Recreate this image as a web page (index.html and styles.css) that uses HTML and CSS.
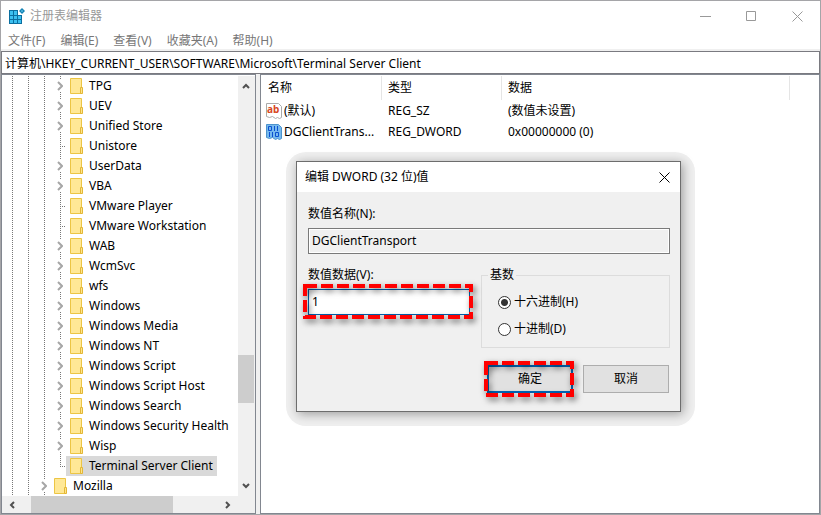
FILE: index.html
```html
<!DOCTYPE html>
<html lang="zh-CN">
<head>
    <meta charset="UTF-8">
    <meta name="viewport" content="width=device-width, initial-scale=1.0">
    <title>注册表编辑器</title>
    <link rel="stylesheet" href="styles.css">
</head>
<body>
    <svg style="display: none;">
        <symbol id="folder" viewBox="0 0 13 16">
            <path d="M.5.5h11v15H.5z" fill="#ffe896" stroke="#ecc544"/>
            <path d="M10.5 9.5h2v6h-2z" fill="#ffe48a" stroke="#e3b736"/>
        </symbol>
        <symbol id="arrow" viewBox="0 0 6 8">
            <path d="M1 0l4 4-4 4" fill="none" stroke="#a6a6a6" stroke-width="2"/>
        </symbol>
        <symbol id="scroll-arrow" viewBox="0 0 8 8">
            <path d="M1 6l3-3 3 3" fill="none" stroke="#505050" stroke-width="2"/>
        </symbol>
    </svg>

    <div class="window">
        <header class="titlebar">
            <svg class="app-icon" viewBox="0 0 16 16">
                <path d="M0 2h9v5h4v9H0z" fill="#0b6fa0"/>
                <path d="M1 3h3v4H1zM5 3h3v4H5zM1 8h3v3H1zM5 8h3v3H5zM9 8h3v3H9zM1 12h3v3H1zM5 12h3v3H5zM9 12h3v3H9z" fill="#3cc0f0"/>
                <path d="M13 0l3 3-3 3-3-3z" fill="#1583b5"/>
                <path d="M13 2l1 1-1 1-1-1z" fill="#6fd3f7"/>
            </svg>
            <h1>注册表编辑器</h1>
            <div class="window-buttons">
                <button type="button" aria-label="最小化"><svg viewBox="0 0 11 11"><path d="M0 5.5h11"/></svg></button>
                <button type="button" aria-label="最大化"><svg viewBox="0 0 11 11"><path d="M.5.5h9v9h-9z"/></svg></button>
                <button type="button" aria-label="关闭"><svg viewBox="0 0 11 11"><path d="M.5.5l10 10M10.5.5l-10 10"/></svg></button>
            </div>
        </header>

        <nav class="menu">
            <a href="#">文件(F)</a>
            <a href="#">编辑(E)</a>
            <a href="#">查看(V)</a>
            <a href="#">收藏夹(A)</a>
            <a href="#">帮助(H)</a>
        </nav>

        <input class="address" type="text" aria-label="地址" value="计算机\HKEY_CURRENT_USER\SOFTWARE\Microsoft\Terminal Server Client">

        <main class="panes">
            <section class="tree-pane">
                <ul class="tree" id="tree"></ul>
                <div class="scroll scroll-v">
                    <svg><use href="#scroll-arrow"/></svg>
                    <div class="thumb"></div>
                    <svg class="down"><use href="#scroll-arrow"/></svg>
                </div>
                <div class="scroll scroll-h">
                    <svg class="left"><use href="#scroll-arrow"/></svg>
                    <div class="thumb"></div>
                    <svg class="right"><use href="#scroll-arrow"/></svg>
                </div>
            </section>

            <section class="values-pane">
                <table>
                    <thead>
                        <tr><th class="col-name">名称</th><th class="col-type">类型</th><th class="col-data">数据</th><th class="col-rest"></th></tr>
                    </thead>
                    <tbody>
                        <tr>
                            <td class="value-name">
                                <svg viewBox="0 0 16 16">
                                    <path d="M.5.5h12l3 3v11l-2 1-2-1-2 1-3-2-3 1-3-1z" fill="#fff" stroke="#aaa"/>
                                    <text x="1" y="10" fill="#d8481f">ab</text>
                                </svg>
                                <span>(默认)</span>
                            </td>
                            <td>REG_SZ</td>
                            <td>(数值未设置)</td>
                            <td></td>
                        </tr>
                        <tr>
                            <td class="value-name">
                                <svg viewBox="0 0 16 16">
                                    <path d="M.5.5h12l3 3v11l-2 1-2-1-2 1-3-2-3 1-3-1z" fill="#76b9ee" stroke="#4d93cc"/>
                                    <path d="M2.5 2.500h3v4h-3zM8.500 2v5M11.500 2v5M3.500 8v5M6.500 8v5M9.500 8.500h3v4h-3z" fill="none" stroke="#0b50d0"/>
                                </svg>
                                <span>DGClientTrans...</span>
                            </td>
                            <td>REG_DWORD</td>
                            <td>0x00000000 (0)</td>
                            <td></td>
                        </tr>
                    </tbody>
                </table>
            </section>
        </main>
    </div>

    <div class="dialog-halo">
        <form class="dialog" role="dialog" aria-labelledby="dialog-title">
            <div class="dialog-title">
                <h2 id="dialog-title">编辑 DWORD (32 位)值</h2>
                <button type="button" aria-label="关闭"><svg viewBox="0 0 11 11"><path d="M.5.5l10 10M10.5.5l-10 10"/></svg></button>
            </div>
            <div class="dialog-body">
                <div class="field field-name">
                    <label for="value-name">数值名称(N):</label>
                    <input type="text" id="value-name" value="DGClientTransport" readonly>
                </div>
                <div class="field">
                    <label for="value-data">数值数据(V):</label>
                    <div class="marked mark-input">
                        <input type="text" id="value-data" value="1">
                        <svg class="mark"><rect width="100%" height="100%"/></svg>
                    </div>
                </div>
                <fieldset>
                    <legend>基数</legend>
                    <label for="hex"><input type="radio" name="base" id="hex" checked>十六进制(H)</label>
                    <label for="dec"><input type="radio" name="base" id="dec">十进制(D)</label>
                </fieldset>
                <div class="actions">
                    <div class="marked mark-button">
                        <button type="submit" class="primary">确定</button>
                        <svg class="mark"><rect width="100%" height="100%"/></svg>
                    </div>
                    <button type="button">取消</button>
                </div>
            </div>
        </form>
    </div>

    <script src="script.js"></script>
</body>
</html>
```
FILE: styles.css
```css
* {
    box-sizing: border-box;
}
body {
    margin: 0;
    background-color: #9b9b9f;
    color: #000;
    font-family: "Noto Sans", "Noto Sans CJK SC", sans-serif;
    font-size: 12px;
    line-height: 20px;
}
input, button {
    font: inherit;
    color: inherit;
    margin: 0;
}
.window {
    display: flex;
    flex-direction: column;
    height: 100vh;
    border: 1px solid #a5a5a8;
    background-color: #f0f0f0;
}

/* title bar and menu */
.titlebar {
    display: flex;
    align-items: center;
    height: 30px;
    padding-left: 8px;
    background-color: white;
    color: #999;
}
.app-icon {
    width: 16px;
    height: 16px;
}
.titlebar h1 {
    flex: 1;
    margin: 0 0 0 5px;
    font-size: 12px;
    font-weight: normal;
}
.window-buttons {
    display: flex;
}
.window-buttons button {
    display: flex;
    align-items: center;
    justify-content: center;
    width: 46px;
    height: 29px;
    padding: 0;
    border: none;
    background: none;
}
.window-buttons svg, .dialog-title svg {
    width: 11px;
    height: 11px;
    fill: none;
    stroke: #999;
}
.menu {
    display: flex;
    gap: 15px;
    height: 18px;
    padding-left: 7px;
    margin-bottom: 2px;
    background-color: white;
}
.menu a {
    color: #777;
    text-decoration: none;
}
.address {
    width: 100%;
    height: 23px;
    padding: 0 3px;
    border: 1px solid #7a7a80;
    background-color: white;
}

/* panes */
.panes {
    display: flex;
    flex: 1;
    gap: 4px;
    min-height: 0;
}
.tree-pane, .values-pane {
    border: 1px solid #828790;
    background-color: white;
    padding-top: 1px;
}
.tree-pane {
    display: grid;
    grid-template-columns: 1fr 17px;
    grid-template-rows: 1fr 17px;
    width: 255px;
}
.values-pane {
    flex: 1;
}
.tree {
    margin: 0;
    padding: 0 0 0 2px;
    list-style: none;
    min-height: 0;
    overflow: hidden;
}
.tree li {
    display: flex;
    height: 20px;
    white-space: nowrap;
}
.guide, .branch {
    flex: none;
    width: 16px;
    background: repeating-linear-gradient(#777 0 1px, white 1px 2px) 8px 0 / 1px 100% no-repeat;
}
.branch {
    display: flex;
    align-items: center;
    width: 14px;
    padding-left: 5px;
}
.branch svg {
    width: 6px;
    height: 12px;
    background-color: white;
}
.leaf {
    background:
        repeating-linear-gradient(#777 0 1px, white 1px 2px) 8px 0 / 1px 100% no-repeat,
        repeating-linear-gradient(90deg, #777 0 1px, white 1px 2px) 8px 10px / 6px 1px no-repeat;
}
.last {
    background-size: 1px 50%, 6px 1px;
}
.node {
    display: flex;
    align-items: center;
    gap: 6px;
    padding: 0 4px;
}
.node svg {
    width: 13px;
    height: 16px;
}
.selected {
    background-color: #d9d9d9;
}

/* scroll bars */
.scroll {
    display: grid;
    background-color: #f0f0f0;
}
.scroll svg {
    width: 8px;
    height: 8px;
    place-self: center;
}
.scroll-v {
    grid-template-rows: 20px 259fr 48fr 73fr 20px;
    padding-right: 1px;
}
.scroll-v .thumb {
    grid-row: 3;
}
.scroll-v .down {
    grid-row: 5;
    transform: rotate(180deg);
}
.scroll-h {
    grid-column: span 2;
    grid-template-columns: 20px 9fr 142fr 45fr 20px;
    padding-right: 17px;
}
.scroll-h .thumb {
    grid-column: 3;
}
.scroll-h .left {
    transform: rotate(-90deg);
}
.scroll-h .right {
    grid-column: 5;
    transform: rotate(90deg);
}
.thumb {
    background-color: #cdcdcd;
}

/* value list */
table {
    width: 100%;
    table-layout: fixed;
    border-collapse: separate;
    border-spacing: 0;
}
th, td {
    height: 21px;
    padding: 0 6px;
    text-align: left;
    font-weight: normal;
    white-space: nowrap;
}
th {
    height: 24px;
    border-right: 1px solid #e5e5e5;
}
.col-rest {
    border-right: none;
}
.col-name {
    width: 121px;
    padding-left: 7px;
}
.col-type {
    width: 120px;
}
.col-data {
    width: 288px;
}
.value-name {
    display: flex;
    align-items: center;
    gap: 2px;
    padding: 0 0 0 5px;
}
.value-name svg {
    width: 16px;
    height: 16px;
}
.value-name text {
    font: bold 10px "Noto Sans", sans-serif;
}

/* edit dialog */
.dialog-halo {
    position: absolute;
    top: 152px;
    left: 286px;
    padding: 9px 14px 14px 10px;
    border-radius: 20px;
    background-color: #efefef;
}
.dialog {
    width: 385px;
    border: 1px solid #6d6d6d;
    background-color: #f0f0f0;
    box-shadow: 2px 2px 10px rgba(0, 0, 0, 0.35);
}
.dialog-title {
    display: flex;
    align-items: center;
    justify-content: space-between;
    height: 30px;
    padding: 0 10px 0 8px;
    background-color: white;
}
.dialog-title h2 {
    margin: 0;
    font-size: 12px;
    font-weight: normal;
}
.dialog-title button {
    display: flex;
    padding: 0;
    border: none;
    background: none;
}
.dialog-title svg {
    stroke: black;
}
.dialog-body {
    display: grid;
    grid-template-columns: 162px 1fr;
    column-gap: 11px;
    padding: 12px 10px 18px 11px;
}
.field {
    display: flex;
    flex-direction: column;
    gap: 4px;
}
.field input {
    width: 100%;
    height: 26px;
    padding: 0 3px 2px;
    border: 1px solid #7a7a7a;
    background-color: white;
    outline: none;
}
.field-name {
    grid-column: span 2;
    margin-bottom: 11px;
}
.field-name input {
    background-color: #f0f0f0;
    box-shadow: inset 0 0 0 1px white;
}
.marked {
    position: relative;
}
.marked input {
    display: block;
    border-color: #0063b1;
}
.mark {
    position: absolute;
    overflow: visible;
    pointer-events: none;
    filter: drop-shadow(2px 3px 3px rgba(0, 0, 0, 0.6));
}
.mark rect {
    fill: none;
    stroke: #f00;
    stroke-width: 4;
    stroke-dasharray: 12 4;
}
.mark-input .mark {
    top: -3px;
    left: -3px;
    width: calc(100% + 4px);
    height: calc(100% + 5px);
}
.mark-button .mark {
    top: -2px;
    left: -1px;
    width: 100%;
    height: calc(100% + 4px);
}
fieldset {
    display: flex;
    flex-direction: column;
    gap: 7px;
    height: 83px;
    margin: 0;
    padding: 7px 16px 0;
    border: 1px solid #dcdcdc;
}
legend {
    margin-left: -10px;
    padding: 0 2px;
}
fieldset label {
    display: flex;
    align-items: center;
    gap: 3px;
}
fieldset input {
    appearance: none;
    width: 13px;
    height: 13px;
    border: 1px solid #333;
    border-radius: 50%;
    background-color: white;
}
fieldset input:checked {
    background: radial-gradient(#333 3px, white 4px);
}
.actions {
    display: flex;
    grid-column: span 2;
    justify-content: flex-end;
    gap: 10px;
    margin-top: 17px;
    padding-right: 1px;
}
.actions button {
    width: 86px;
    height: 28px;
    padding: 0;
    border: 1px solid #adadad;
    background-color: #e1e1e1;
}
.actions .primary {
    display: block;
    border: 2px solid #0067b8;
}
```
FILE: script.js
```js
// type: "open" has an arrow, "leaf" a short line, "last" ends its branch
const keys = [
    ["TPG", "open"],
    ["UEV", "open"],
    ["Unified Store", "open"],
    ["Unistore", "leaf"],
    ["UserData", "open"],
    ["VBA", "open"],
    ["VMware Player", "leaf"],
    ["VMware Workstation", "leaf"],
    ["WAB", "open"],
    ["WcmSvc", "open"],
    ["wfs", "open"],
    ["Windows", "open"],
    ["Windows Media", "open"],
    ["Windows NT", "open"],
    ["Windows Script", "open"],
    ["Windows Script Host", "open"],
    ["Windows Search", "open"],
    ["Windows Security Health", "open"],
    ["Wisp", "open"],
    ["Terminal Server Client", "last"],
    ["Mozilla", "open", 2]
];

const tree = document.getElementById("tree");

for (const [name, type, depth = 3] of keys) {
    const item = document.createElement("li");
    const arrow = type === "open" ? '<svg><use href="#arrow"/></svg>' : "";
    const branch = type === "open" ? "branch" : type === "leaf" ? "branch leaf" : "branch leaf last";
    const node = type === "last" ? "node selected" : "node";

    item.innerHTML = '<span class="guide"></span>'.repeat(depth) +
        `<span class="${branch}">${arrow}</span>` +
        `<span class="${node}"><svg><use href="#folder"/></svg><span>${name}</span></span>`;
    tree.appendChild(item);
}
```
